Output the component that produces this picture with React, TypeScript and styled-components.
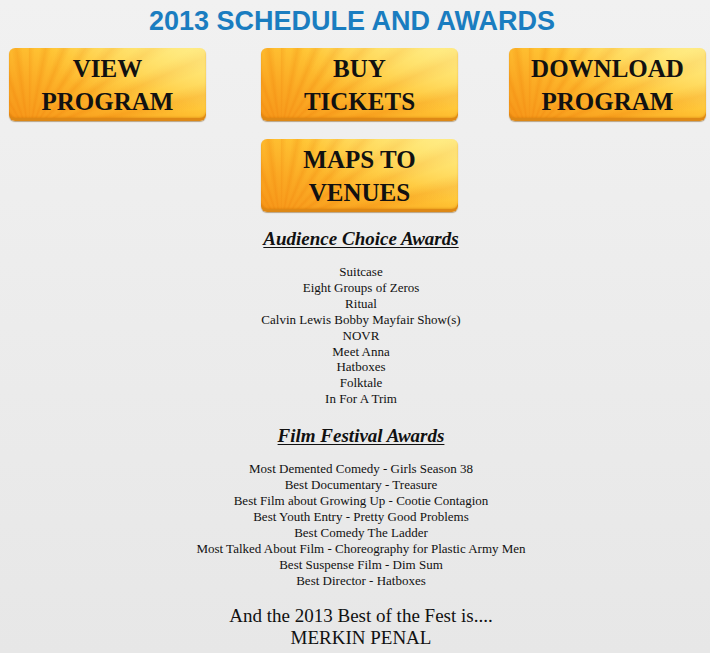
import React from 'react';
import styled, { createGlobalStyle } from 'styled-components';

const audienceChoice: string[] = [
  'Suitcase',
  'Eight Groups of Zeros',
  'Ritual',
  'Calvin Lewis Bobby Mayfair Show(s)',
  'NOVR',
  'Meet Anna',
  'Hatboxes',
  'Folktale',
  'In For A Trim',
];

const festivalAwards: string[] = [
  'Most Demented Comedy - Girls Season 38',
  'Best Documentary - Treasure',
  'Best Film about Growing Up - Cootie Contagion',
  'Best Youth Entry - Pretty Good Problems',
  'Best Comedy The Ladder',
  'Most Talked About Film - Choreography for Plastic Army Men',
  'Best Suspense Film - Dim Sum',
  'Best Director - Hatboxes',
];

interface ButtonItem {
  lines: [string, string];
  column: number;
  row: number;
}

const buttons: ButtonItem[] = [
  { lines: ['VIEW', 'PROGRAM'], column: 1, row: 1 },
  { lines: ['BUY', 'TICKETS'], column: 2, row: 1 },
  { lines: ['DOWNLOAD', 'PROGRAM'], column: 3, row: 1 },
  { lines: ['MAPS TO', 'VENUES'], column: 2, row: 2 },
];

function App(): React.ReactElement {
  return (
    <Page>
      <GlobalStyle />
      <Title>2013 SCHEDULE AND AWARDS</Title>

      <ButtonGrid>
        {buttons.map((b) => (
          <SunButton key={b.lines.join(' ')} $column={b.column} $row={b.row} href="#">
            {b.lines[0]}
            <br />
            {b.lines[1]}
          </SunButton>
        ))}
      </ButtonGrid>

      <Awards>
        <Heading>Audience Choice Awards</Heading>
        <List>
          {audienceChoice.map((item) => (
            <li key={item}>{item}</li>
          ))}
        </List>

        <Heading $top={18}>Film Festival Awards</Heading>
        <List>
          {festivalAwards.map((item) => (
            <li key={item}>{item}</li>
          ))}
        </List>

        <BestOf>
          And the 2013 Best of the Fest is....
          <br />
          MERKIN PENAL
        </BestOf>
      </Awards>
    </Page>
  );
}

export default App;

const GlobalStyle = createGlobalStyle`
  html, body {
    margin: 0;
    padding: 0;
    background: #ececec;
  }
`;

const Page = styled.div`
  width: 710px;
  min-height: 653px;
  padding-top: 6px;
  box-sizing: border-box;
  background: linear-gradient(#f1f1f1, #e7e7e7);
  font-family: 'Liberation Serif', 'Times New Roman', serif;
  color: #111;
`;

const Title = styled.h1`
  margin: 0;
  padding-right: 6px;
  font-family: 'Liberation Sans', Arial, sans-serif;
  font-size: 27px;
  font-weight: 700;
  line-height: 30px;
  text-align: center;
  color: #1a7dc0;
`;

const ButtonGrid = styled.div`
  display: grid;
  grid-template-columns: 252px 248px 197px;
  grid-template-rows: 73px 73px;
  row-gap: 18px;
  margin-top: 12px;
  padding-left: 9px;
`;

/* sunburst: soft rays from the lower left, fading out towards the top right */
const SunButton = styled.a<{ $column: number; $row: number }>`
  grid-column: ${(p) => p.$column};
  grid-row: ${(p) => p.$row};
  width: 197px;
  height: 73px;
  display: flex;
  align-items: center;
  justify-content: center;
  text-align: center;
  border-radius: 6px;
  box-sizing: border-box;
  text-decoration: none;
  color: #111;
  font-family: 'Liberation Serif', 'Times New Roman', serif;
  font-size: 25px;
  font-weight: 700;
  line-height: 33px;
  background:
    radial-gradient(ellipse 75% 90% at 95% 0%, rgba(255, 236, 130, 0.75), rgba(255, 236, 130, 0) 100%),
    repeating-conic-gradient(
      from 0deg at 10% 120%,
      rgba(238, 125, 8, 0.24) 0deg,
      rgba(238, 125, 8, 0) 4deg,
      rgba(238, 125, 8, 0) 7deg,
      rgba(238, 125, 8, 0.24) 11deg
    ),
    linear-gradient(22deg, #f69418 0%, #fbaa24 30%, #ffc434 58%, #ffdb5e 82%, #ffec90 100%);
  box-shadow:
    inset 0 -3px 0 #dd8816,
    inset 0 -4px 2px rgba(200, 110, 0, 0.35),
    0 1px 1px rgba(120, 70, 0, 0.45);
`;

const Awards = styled.div`
  padding-left: 12px;
  margin-top: 16px;
  text-align: center;
`;

const Heading = styled.h2<{ $top?: number }>`
  margin: ${(p) => p.$top ?? 0}px 0 0;
  font-size: 19px;
  font-weight: 700;
  font-style: italic;
  line-height: 22px;
  text-decoration: underline;
  text-underline-offset: 2px;
`;

const List = styled.ul`
  list-style: none;
  margin: 14px 0 0;
  padding: 0;
  font-size: 13px;
  line-height: 15.9px;
`;

const BestOf = styled.p`
  margin: 17px 0 0;
  font-size: 19px;
  line-height: 22px;
`;
